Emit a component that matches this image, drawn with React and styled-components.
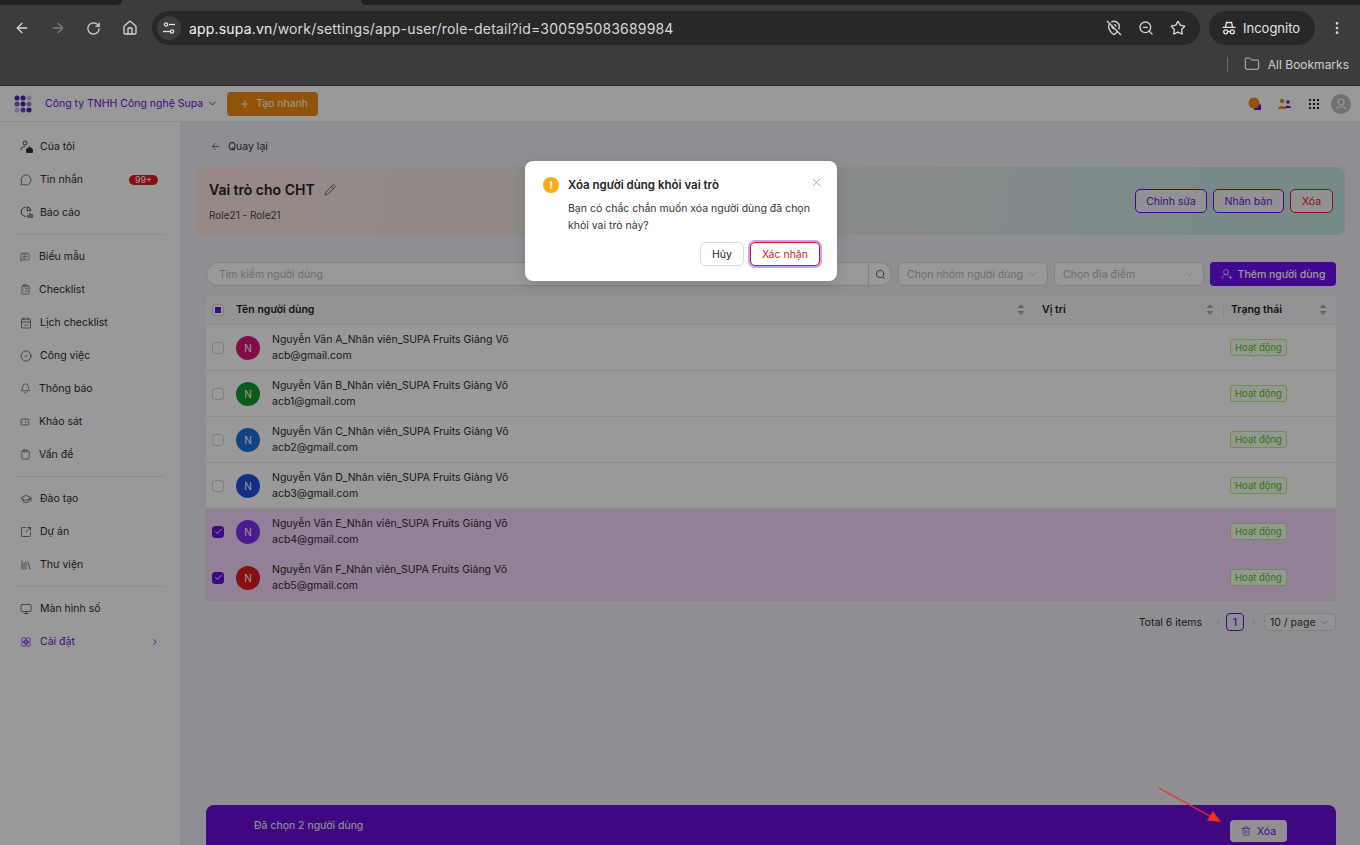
import React from "react";
import styled, { createGlobalStyle } from "styled-components";
import {
  ArrowLeft, ArrowRight, RotateCw, Home, ZoomOut, Star, MoreVertical, Folder, MapPinOff, X, Plus, ChevronDown, ChevronRight, ChevronLeft,
  Pencil, Search, Check, Trash2, UserRoundPlus, MessageCircle, ChartPie, ClipboardList, CalendarCheck, CircleCheck, Bell, Ticket, Clipboard,
  GraduationCap, SquareArrowOutUpRight, Library, Monitor, Flower, MessageSquareText, UserRound,
} from "lucide-react";

const Global = createGlobalStyle`
  html, body { margin: 0; padding: 0; height: 100%; overflow: hidden; }
  body { font-family: Inter, "Noto Sans", sans-serif; color: #1f1f1f; }
  #root { height: 100%; }
  * { box-sizing: border-box; }
`;

const Page = styled.div`
  display: flex;
  flex-direction: column;
  height: 845px;
  width: 1360px;
  overflow: hidden;
  position: relative;
`;

/* ---- Browser chrome ---- */
const Chrome = styled.header`
  height: 86px;
  background: #3c3c3c;
  flex: none;
  display: flex;
  flex-direction: column;
  border-bottom: 1px solid #2e2e2e;
`;
const TabStrip = styled.div`
  height: 5px;
  display: flex;
  justify-content: space-between;
  flex: none;
`;
const TabPiece = styled.div`
  width: ${(p) => p.$w}px;
  background: #202020;
  border-radius: ${(p) => (p.$left ? "0 0 8px 0" : "0 0 0 8px")};
`;
const Toolbar = styled.div`
  display: flex;
  align-items: center;
  height: 34px;
  margin-top: 6px;
  padding-left: 14px;
  flex: none;
`;
const NavIcon = styled.span`
  display: inline-flex;
  width: ${(p) => p.$w || 36}px;
  color: ${(p) => (p.$off ? "#7b7b7b" : "#d6d6d6")};
`;
const AddressBar = styled.div`
  width: 1048px;
  height: 34px;
  margin-left: -6px;
  border-radius: 17px;
  background: #282828;
  display: flex;
  align-items: center;
  padding: 0 14px 0 5px;
  color: #e6e6e6;
`;
const SiteButton = styled.span`
  width: 24px;
  height: 24px;
  border-radius: 50%;
  background: #3d3d3d;
  display: inline-flex;
  align-items: center;
  justify-content: center;
  margin-right: 8px;
`;
const Url = styled.span`
  font-size: 14px;
  flex: 1;
  letter-spacing: 0.18px;
  color: #d8d8d8;
  b { font-weight: 400; color: #f2f2f2; }
`;
const EndIcons = styled.div`
  display: flex;
  align-items: center;
  gap: 16px;
  color: #d6d6d6;
`;
const Incognito = styled.div`
  margin-left: 9px;
  width: 106px;
  height: 34px;
  border-radius: 17px;
  background: #282828;
  color: #e6e6e6;
  font-size: 13px;
  display: flex;
  align-items: center;
  gap: 6px;
  padding-left: 12px;
`;
const Kebab = styled.span`
  margin-left: 14px;
  display: inline-flex;
  color: #d6d6d6;
`;
const BookmarkRow = styled.div`
  display: flex;
  align-items: center;
  justify-content: flex-end;
  height: 26px;
  margin-top: 6px;
  padding-right: 11px;
  color: #cfcfcf;
  font-size: 12px;
  gap: 8px;
`;
const BookmarkSep = styled.span`
  width: 1px;
  height: 15px;
  background: #6a6a6a;
  margin-right: 8px;
`;

/* ---- App ---- */
const AppArea = styled.div`
  position: relative;
  flex: 1;
  min-height: 0;
  display: flex;
  flex-direction: column;
`;
const TopBar = styled.div`
  height: 36px;
  flex: none;
  background: #ffffff;
  display: flex;
  align-items: center;
  padding: 0 9px 0 14px;
  border-bottom: 1px solid #eee;
`;
const Company = styled.span`
  color: #6a10d8;
  font-size: 10.5px;
  margin-left: 13px;
`;
const CompanyCaret = styled.span`
  display: inline-flex;
  color: #6a10d8;
  margin-left: 4px;
`;
const QuickButton = styled.button`
  margin-left: 9px;
  width: 91px;
  height: 24px;
  border: 0;
  border-radius: 4px;
  background: #f08a10;
  color: #fff;
  font: 10.5px Inter, sans-serif;
  display: flex;
  align-items: center;
  gap: 5px;
  padding-left: 12px;
`;
const TopRight = styled.div`
  margin-left: auto;
  display: flex;
  align-items: center;
`;
const Body = styled.div`
  flex: 1;
  min-height: 0;
  display: flex;
`;
const Sidebar = styled.nav`
  width: 180px;
  flex: none;
  background: #ffffff;
  padding-top: 8px;
`;
const NavItem = styled.a`
  height: 33px;
  display: flex;
  align-items: center;
  padding-left: 20px;
  gap: ${(p) => p.$gap || 7}px;
  font-size: 10.5px;
  color: ${(p) => (p.$active ? "#6a10d8" : "#2b2b2b")};
`;
const NavBadge = styled.span`
  margin-left: auto;
  margin-right: 22px;
  background: #e11a22;
  color: #fff;
  font-size: 9px;
  line-height: 10px;
  height: 10px;
  width: 29px;
  text-align: center;
  border-radius: 5px;
`;
const NavArrow = styled.span`
  margin-left: auto;
  margin-right: 20px;
  display: inline-flex;
`;
const NavDivider = styled.hr`
  border: 0;
  height: 1px;
  background: #ececec;
  margin: 5px 16px 5px 14px;
`;
const Main = styled.main`
  flex: 1;
  min-width: 0;
  background: #eeeff5;
  display: flex;
  flex-direction: column;
  padding: 14px 15px 0 17px;
`;
const Back = styled.div`
  height: 20px;
  display: flex;
  align-items: center;
  gap: 7px;
  font-size: 10.5px;
  padding-left: 13px;
  color: #333;
`;
const Banner = styled.section`
  margin-top: 11px;
  height: 68px;
  flex: none;
  border-radius: 8px;
  background: linear-gradient(100deg, #fbe5de 0%, #e8e6e8 50%, #c2e7e5 100%);
  display: flex;
  align-items: center;
  justify-content: space-between;
  padding: 0 12px;
`;
const BannerTitle = styled.h1`
  margin: 0;
  font-size: 14px;
  font-weight: 600;
  display: flex;
  align-items: center;
  gap: 9px;
  color: #222;
`;
const BannerSub = styled.div`
  font-size: 10px;
  margin-top: 11px;
  color: #444;
`;
const BannerActions = styled.div`
  display: flex;
  gap: 6px;
`;
const OutlineButton = styled.button`
  width: ${(p) => p.$w}px;
  height: 24px;
  border-radius: 5px;
  border: 1px solid ${(p) => (p.$danger ? "#e02020" : "#6a10d8")};
  color: ${(p) => (p.$danger ? "#e02020" : "#6a10d8")};
  background: #f4f3f8;
  font: 10.5px Inter, sans-serif;
  padding: 0;
`;
const Content = styled.div`
  flex: 1;
  min-height: 0;
  display: flex;
  flex-direction: column;
  padding: 0 9px;
`;
const FilterRow = styled.div`
  margin-top: 27px;
  display: flex;
  gap: 6px;
  height: 24px;
  flex: none;
`;
const SearchBox = styled.div`
  flex: 1;
  display: flex;
  align-items: center;
  background: #fff;
  border: 1px solid #d9d9d9;
  border-radius: 12px;
  font-size: 10.5px;
  color: #b5b5b5;
  padding-left: 12px;
`;
const SearchPlaceholder = styled.span`
  flex: 1;
`;
const SearchBtn = styled.span`
  width: 23px;
  height: 100%;
  border-left: 1px solid #d9d9d9;
  display: flex;
  align-items: center;
  justify-content: center;
  color: #555;
`;
const SelectBox = styled.div`
  width: 150px;
  height: 24px;
  background: #fff;
  border: 1px solid #d9d9d9;
  border-radius: 6px;
  font-size: 10.5px;
  color: #b5b5b5;
  display: flex;
  align-items: center;
  justify-content: space-between;
  padding: 0 8px;
`;
const AddButton = styled.button`
  width: 126px;
  height: 24px;
  border: 0;
  border-radius: 4px;
  background: #6f10f0;
  color: #fff;
  font: 500 10.5px Inter, sans-serif;
  display: flex;
  align-items: center;
  justify-content: center;
  gap: 5px;
`;
const Table = styled.div`
  margin-top: 9px;
  border-radius: 6px 6px 0 0;
  overflow: hidden;
  flex: none;
`;
const HeadRow = styled.div`
  display: grid;
  grid-template-columns: 1fr 189px 113px;
  height: 30px;
  background: #f5f5f8;
  border-bottom: 1px solid #e6e6e6;
`;
const HeadCell = styled.div`
  position: relative;
  display: flex;
  align-items: center;
  justify-content: space-between;
  padding: 0 9px 0 ${(p) => p.$pad || 8}px;
  font-size: 10.5px;
  font-weight: 600;
  color: #222;
  & + &::before {
    content: "";
    position: absolute;
    left: 0;
    top: 7px;
    bottom: 7px;
    width: 1px;
    background: #e2e2e2;
  }
`;
const HeadStart = styled.span`
  display: flex;
  align-items: center;
  gap: 12px;
`;
const Box = styled.span`
  width: 12px;
  height: 12px;
  border-radius: 3px;
  flex: none;
  display: inline-flex;
  align-items: center;
  justify-content: center;
  border: 1px solid ${(p) => (p.$on ? "#6a10d8" : "#d4d4d4")};
  background: ${(p) => (p.$on ? "#6a10d8" : "#fff")};
  color: #fff;
`;
const HalfBox = styled(Box)`
  background: #fff;
  border-color: #d4d4d4;
  &::after {
    content: "";
    width: 6px;
    height: 6px;
    background: #6a10d8;
  }
`;
const Row = styled.div`
  display: grid;
  grid-template-columns: 1fr 189px 113px;
  height: 46px;
  background: ${(p) => (p.$sel ? "#f2d6fa" : "#fff")};
  border-bottom: 1px solid ${(p) => (p.$sel ? "#f2d6fa" : "#e8e8e8")};
`;
const UserCell = styled.div`
  display: flex;
  align-items: center;
  padding-left: 6px;
  gap: 12px;
`;
const Avatar = styled.span`
  width: 24px;
  height: 24px;
  border-radius: 50%;
  background: ${(p) => p.$c};
  color: #fff;
  font-size: 10px;
  display: flex;
  align-items: center;
  justify-content: center;
  flex: none;
`;
const UserText = styled.div`
  font-size: 10.5px;
  line-height: 16px;
  color: #2b2b2b;
`;
const StatusCell = styled.div`
  display: flex;
  align-items: center;
  padding-left: 7px;
`;
const StatusTag = styled.span`
  width: 57px;
  height: 17px;
  border-radius: 3px;
  border: 1px solid #b7eb8f;
  background: #f6ffed;
  color: #52c41a;
  font-size: 9.5px;
  display: flex;
  align-items: center;
  justify-content: center;
`;
const Pager = styled.div`
  margin-top: 12px;
  display: flex;
  align-items: center;
  justify-content: flex-end;
  font-size: 10.5px;
  color: #2b2b2b;
  height: 18px;
`;
const PagerArrow = styled.span`
  display: inline-flex;
  color: #bbb;
  margin: ${(p) => p.$m};
`;
const PagerNum = styled.span`
  width: 18px;
  height: 18px;
  border: 1px solid #6a10d8;
  border-radius: 4px;
  color: #6a10d8;
  display: flex;
  align-items: center;
  justify-content: center;
  font-weight: 500;
`;
const PagerSelect = styled.span`
  width: 72px;
  height: 18px;
  border: 1px solid #d9d9d9;
  border-radius: 4px;
  background: #f4f4f7;
  display: flex;
  align-items: center;
  justify-content: space-between;
  padding: 0 5px;
  color: #333;
`;
const SelectionBar = styled.div`
  margin-top: auto;
  height: 40px;
  flex: none;
  background: #690cd6;
  border-radius: 8px 8px 0 0;
  display: flex;
  align-items: center;
  justify-content: space-between;
  padding: 0 49px 0 48px;
  color: #fff;
  font-size: 10.5px;
`;
const BarButton = styled.button`
  width: 57px;
  height: 22px;
  margin-top: 12px;
  border: 0;
  border-radius: 4px;
  background: #f0f0f3;
  color: #6a10d8;
  font: 10.5px Inter, sans-serif;
  display: flex;
  align-items: center;
  justify-content: center;
  gap: 6px;
`;

/* ---- Overlay ---- */
const Mask = styled.div`
  position: absolute;
  inset: 0;
  background: rgba(0, 0, 0, 0.4);
`;
const Modal = styled.div`
  position: absolute;
  left: 525px;
  top: 75px;
  width: 312px;
  height: 120px;
  background: #fff;
  border-radius: 8px;
  padding: 15px 17px 15px 18px;
  box-shadow: 0 4px 16px rgba(0, 0, 0, 0.12);
  display: flex;
  flex-direction: column;
`;
const ModalHead = styled.div`
  display: flex;
  align-items: center;
  gap: 9px;
  font-size: 11.5px;
  font-weight: 600;
  color: #222;
  height: 18px;
`;
const WarnDot = styled.span`
  width: 16px;
  height: 16px;
  border-radius: 50%;
  background: #faad14;
  color: #fff;
  font-size: 11px;
  font-weight: 700;
  display: flex;
  align-items: center;
  justify-content: center;
`;
const ModalClose = styled.span`
  margin-left: auto;
  margin-right: -3px;
  margin-top: -6px;
  display: inline-flex;
  color: #8c8c8c;
`;
const ModalBody = styled.p`
  margin: 6px 0 0 25px;
  font-size: 10.5px;
  line-height: 17px;
  color: #333;
`;
const ModalActions = styled.div`
  margin-top: auto;
  display: flex;
  justify-content: flex-end;
  gap: 6px;
`;
const CancelButton = styled.button`
  width: 44px;
  height: 24px;
  border: 1px solid #dcdcdc;
  border-radius: 5px;
  background: #fff;
  color: #222;
  font: 10.5px Inter, sans-serif;
`;
const ConfirmButton = styled.button`
  width: 70px;
  height: 24px;
  border: 1px solid #c41a1a;
  border-radius: 5px;
  background: #fff;
  color: #c41a1a;
  font: 10.5px Inter, sans-serif;
  box-shadow: 0 0 0 2px #cf9cf5;
`;
const RedArrow = styled.svg`
  position: absolute;
  left: 1155px;
  top: 698px;
  width: 72px;
  height: 44px;
`;

const Logo = () => (
  <svg width="18" height="18" viewBox="0 0 18 18">
    {[
      [3, 3, "#4b1fb0"], [9, 3, "#4b1fb0"], [15, 3, "#c9c2e0"],
      [3, 9, "#7c5cc8"], [9, 9, "#4b1fb0"], [15, 9, "#9a85d0"],
      [3, 15, "#c9c2e0"], [9, 15, "#6a4cc0"], [15, 15, "#4b1fb0"],
    ].map(([x, y, c]) => <circle key={`${x}${y}`} cx={x} cy={y} r="2.5" fill={c} />)}
  </svg>
);
const SiteIcon = () => (
  <svg width="14" height="14" viewBox="0 0 14 14" fill="none" stroke="#e0e0e0" strokeWidth="1.3">
    <circle cx="4" cy="3.5" r="1.6" /><path d="M7 3.5h6" />
    <circle cx="10" cy="10.5" r="1.6" /><path d="M1 10.5h7" />
  </svg>
);
const IncognitoIcon = () => (
  <svg width="16" height="16" viewBox="0 0 16 16" fill="none" stroke="#e6e6e6" strokeWidth="1.3">
    <path d="M4.5 7l1-4.5h5l1 4.5M1.5 7.3h13" />
    <circle cx="4.7" cy="11.8" r="2" /><circle cx="11.3" cy="11.8" r="2" /><path d="M6.7 11.5h2.6" />
  </svg>
);
const HomeUser = () => (
  <svg width="13" height="13" viewBox="0 0 13 13" fill="none" stroke="#333" strokeWidth=".9">
    <circle cx="5" cy="3" r="2" /><path d="M1 10c0-2.2 1.6-3.5 4-3.5" />
    <path d="M6.5 9.2L9.5 7l3 2.2V12.5h-6z" fill="#333" />
  </svg>
);
const ChartIcon = () => (
  <svg width="13" height="13" viewBox="0 0 13 13" fill="none" stroke="#333" strokeWidth=".9">
    <path d="M5.5 1.2A4.6 4.6 0 1 0 6 10.4" /><path d="M7.2 1a4 4 0 0 1 3.6 3.7H7.2z" />
    <path d="M8 12V9M10 12V7M12 12V8" strokeWidth="1.1" />
  </svg>
);
const Sort = () => (
  <svg width="8" height="13" viewBox="0 0 8 13" fill="#a8a8a8">
    <path d="M4 1l3.4 4H.6zM4 12L.6 8h6.8z" />
  </svg>
);
const Dot = styled.svg`
  margin-left: ${(p) => p.$ml || 0}px;
`;

const ic = { size: 12, strokeWidth: 1.3, color: "#333" };
const NAV = [
  [
    [<HomeUser key="i" />, "Của tôi", 7],
    [<MessageCircle key="i" {...ic} />, "Tin nhắn", 8, "99+"],
    [<ChartIcon key="i" />, "Báo cáo", 7],
  ],
  [
    [<MessageSquareText key="i" {...ic} size={10} />, "Biểu mẫu", 9],
    [<ClipboardList key="i" {...ic} size={11} />, "Checklist", 8],
    [<CalendarCheck key="i" {...ic} />, "Lịch checklist", 8],
    [<CircleCheck key="i" {...ic} />, "Công việc", 8],
    [<Bell key="i" {...ic} size={11} />, "Thông báo", 8],
    [<Ticket key="i" {...ic} size={10} />, "Khảo sát", 9],
    [<Clipboard key="i" {...ic} size={11} />, "Vấn đề", 8],
  ],
  [
    [<GraduationCap key="i" {...ic} />, "Đào tạo", 8],
    [<SquareArrowOutUpRight key="i" {...ic} />, "Dự án", 8],
    [<Library key="i" {...ic} />, "Thư viện", 8],
  ],
  [
    [<Monitor key="i" {...ic} />, "Màn hình số", 8],
    [<Flower key="i" {...ic} color="#6a10d8" />, "Cài đặt", 8, null, true],
  ],
];

const USERS = [
  ["A", "acb@gmail.com", "#d6177a", false],
  ["B", "acb1@gmail.com", "#12992f", false],
  ["C", "acb2@gmail.com", "#1a70d8", false],
  ["D", "acb3@gmail.com", "#1f4fe0", false],
  ["E", "acb4@gmail.com", "#7a2cf0", true],
  ["F", "acb5@gmail.com", "#e01a1a", true],
];

export default function App() {
  return (
    <Page>
      <Global />
      <Chrome>
        <TabStrip>
          <TabPiece $w={122} $left />
          <TabPiece $w={999} />
        </TabStrip>
        <Toolbar>
          <NavIcon><ArrowLeft size={16} /></NavIcon>
          <NavIcon $off><ArrowRight size={16} /></NavIcon>
          <NavIcon><RotateCw size={15} /></NavIcon>
          <NavIcon><Home size={16} /></NavIcon>
          <AddressBar>
            <SiteButton><SiteIcon /></SiteButton>
            <Url><b>app.supa.vn</b>/work/settings/app-user/role-detail?id=300595083689984</Url>
            <EndIcons>
              <MapPinOff size={16} />
              <ZoomOut size={16} />
              <Star size={16} />
            </EndIcons>
          </AddressBar>
          <Incognito><IncognitoIcon />Incognito</Incognito>
          <Kebab><MoreVertical size={16} /></Kebab>
        </Toolbar>
        <BookmarkRow>
          <BookmarkSep />
          <Folder size={16} strokeWidth={1.3} />
          All Bookmarks
        </BookmarkRow>
      </Chrome>

      <AppArea>
        <TopBar>
          <Logo />
          <Company>Công ty TNHH Công nghệ Supa</Company>
          <CompanyCaret><ChevronDown size={11} /></CompanyCaret>
          <QuickButton><Plus size={12} />Tạo nhanh</QuickButton>
          <TopRight>
            <svg width="14" height="14" viewBox="0 0 14 14">
              <path d="M5 6l8 1.5V13H6z" fill="#6a10d8" />
              <circle cx="6" cy="6" r="5.5" fill="#f08a10" />
            </svg>
            <Dot $ml={16} width="13" height="12" viewBox="0 0 13 12">
              <circle cx="4" cy="3" r="2.2" fill="#f08a10" />
              <path d="M0 11c0-4 8-4 8 0z" fill="#f08a10" />
              <circle cx="10" cy="4" r="1.8" fill="#6a10d8" />
              <path d="M7 10c0-3 6-3 6 0z" fill="#6a10d8" />
            </Dot>
            <Dot $ml={18} width="10" height="10" viewBox="0 0 10 10" fill="#222">
              {[1, 5, 9].flatMap((x) => [1, 5, 9].map((y) => <rect key={`${x}${y}`} x={x - 1} y={y - 1} width="2" height="2" />))}
            </Dot>
            <Dot $ml={12} width="20" height="20" viewBox="0 0 20 20" fill="none">
              <circle cx="10" cy="10" r="10" fill="#bdbdbd" />
              <circle cx="10" cy="8" r="3" stroke="#fff" strokeWidth="1.2" />
              <path d="M5.5 15c.5-3 8.500-3 9 0" stroke="#fff" strokeWidth="1.2" />
            </Dot>
          </TopRight>
        </TopBar>
        <Body>
          <Sidebar>
            {NAV.map((group, i) => (
              <React.Fragment key={i}>
                {i > 0 && <NavDivider />}
                {group.map(([icon, label, gap, badge, active]) => (
                  <NavItem key={label} $gap={gap} $active={active}>
                    {icon}
                    {label}
                    {badge && <NavBadge>{badge}</NavBadge>}
                    {active && <NavArrow><ChevronRight size={10} color="#6a10d8" /></NavArrow>}
                  </NavItem>
                ))}
              </React.Fragment>
            ))}
          </Sidebar>
          <Main>
            <Back><ArrowLeft size={11} strokeWidth={1.4} />Quay lại</Back>
            <Banner>
              <div>
                <BannerTitle>Vai trò cho CHT <Pencil size={12} strokeWidth={1.3} /></BannerTitle>
                <BannerSub>Role21 - Role21</BannerSub>
              </div>
              <BannerActions>
                <OutlineButton $w={72}>Chỉnh sửa</OutlineButton>
                <OutlineButton $w={71}>Nhân bản</OutlineButton>
                <OutlineButton $w={43} $danger>Xóa</OutlineButton>
              </BannerActions>
            </Banner>
            <Content>
              <FilterRow>
                <SearchBox>
                  <SearchPlaceholder>Tìm kiếm người dùng</SearchPlaceholder>
                  <SearchBtn><Search size={11} /></SearchBtn>
                </SearchBox>
                <SelectBox>Chọn nhóm người dùng<ChevronDown size={12} strokeWidth={1.2} /></SelectBox>
                <SelectBox>Chọn địa điểm<ChevronDown size={12} strokeWidth={1.2} /></SelectBox>
                <AddButton><UserRoundPlus size={12} strokeWidth={1.3} />Thêm người dùng</AddButton>
              </FilterRow>
              <Table>
                <HeadRow>
                  <HeadCell $pad={6}><HeadStart><HalfBox />Tên người dùng</HeadStart><Sort /></HeadCell>
                  <HeadCell><span>Vị trí</span><Sort /></HeadCell>
                  <HeadCell><span>Trạng thái</span><Sort /></HeadCell>
                </HeadRow>
                {USERS.map(([l, mail, color, sel]) => (
                  <Row key={l} $sel={sel}>
                    <UserCell>
                      <Box $on={sel}>{sel && <Check size={9} strokeWidth={2.4} />}</Box>
                      <Avatar $c={color}>N</Avatar>
                      <UserText>Nguyễn Văn {l}_Nhân viên_SUPA Fruits Giảng Võ<br />{mail}</UserText>
                    </UserCell>
                    <div />
                    <StatusCell><StatusTag>Hoạt động</StatusTag></StatusCell>
                  </Row>
                ))}
              </Table>
              <Pager>
                Total 6 items
                <PagerArrow $m="0 3px 0 11px"><ChevronLeft size={10} /></PagerArrow>
                <PagerNum>1</PagerNum>
                <PagerArrow $m="0 5px"><ChevronRight size={10} /></PagerArrow>
                <PagerSelect>10 / page<ChevronDown size={11} color="#aaa" /></PagerSelect>
              </Pager>
              <SelectionBar>
                Đã chọn 2 người dùng
                <BarButton><Trash2 size={10} strokeWidth={1.4} />Xóa</BarButton>
              </SelectionBar>
            </Content>
          </Main>
        </Body>
        <Mask />
        <Modal>
          <ModalHead>
            <WarnDot>!</WarnDot>
            Xóa người dùng khỏi vai trò
            <ModalClose><X size={13} strokeWidth={1.4} /></ModalClose>
          </ModalHead>
          <ModalBody>Bạn có chắc chắn muốn xóa người dùng đã chọn khỏi vai trò này?</ModalBody>
          <ModalActions>
            <CancelButton>Hủy</CancelButton>
            <ConfirmButton>Xác nhận</ConfirmButton>
          </ModalActions>
        </Modal>
        <RedArrow viewBox="0 0 72 44" fill="none">
          <path d="M4 4L60 35" stroke="#f0311a" strokeWidth="1.4" />
          <path d="M66 38L52 36.500L58 27z" fill="#f0311a" />
        </RedArrow>
      </AppArea>
    </Page>
  );
}
